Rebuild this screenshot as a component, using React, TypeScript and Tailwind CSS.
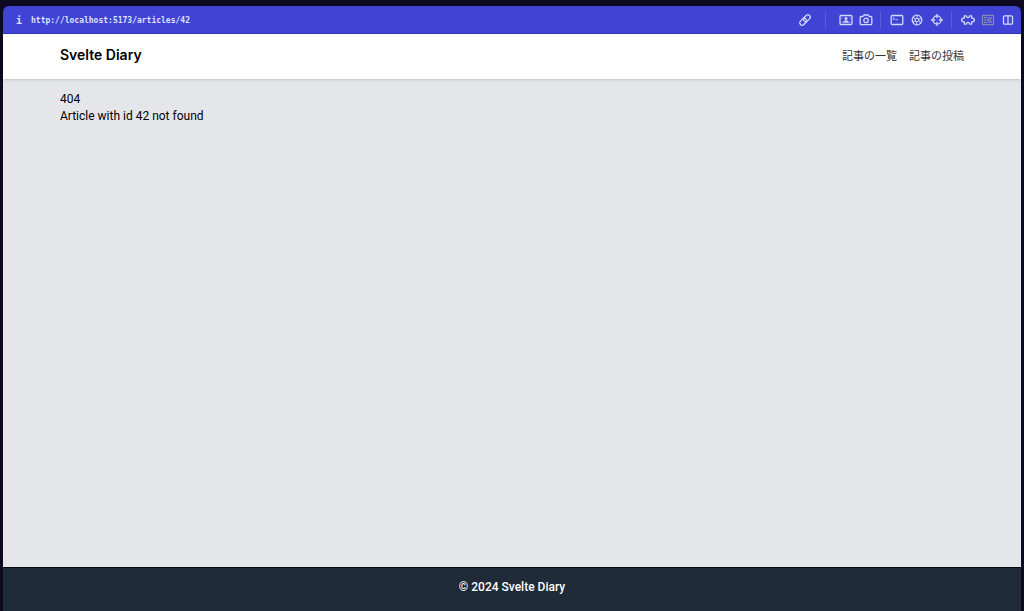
import type { ReactNode } from "react"

interface ToolButtonProps {
  label: string;
  dimmed?: boolean;
  children: ReactNode;
}

function ToolButton({ label, dimmed, children }: ToolButtonProps) {
  return (
    <button
      type="button"
      aria-label={label}
      className={dimmed ? "flex w-5 justify-center text-[#8585b8]" : "flex w-5 justify-center text-[#d3d7ff]"}
    >
      <svg
        viewBox="0 0 14 14"
        className="size-3.5"
        fill="none"
        stroke="currentColor"
        strokeWidth="1.3"
        strokeLinecap="round"
        strokeLinejoin="round"
        aria-hidden="true"
      >
        {children}
      </svg>
    </button>
  )
}

function Divider() {
  return <span className="h-4 w-px bg-[#5b5fdf]" />
}

function AddressBar() {
  return (
    <div className="flex h-7 items-center justify-between rounded-t-md border-b border-[#3338bd] bg-[#4044d4] pr-[3px] pl-3 text-[#dfe1ff]">
      <div className="flex items-center gap-2 pt-0.5 font-['DejaVu_Sans_Mono',monospace] font-bold">
        <span className="w-2 text-center text-[10px]">i</span>
        <a href="http://localhost:5173/articles/42" className="text-[8px]">
          http://localhost:5173/articles/42
        </a>
      </div>

      <div className="flex items-center">
        <ToolButton label="Copy link">
          <g transform="rotate(-45 7 7)">
            <rect x="0.6" y="4.6" width="7.6" height="4.8" rx="2.4" />
            <rect x="5.8" y="4.6" width="7.6" height="4.8" rx="2.4" />
          </g>
        </ToolButton>
        <div className="flex px-2.5"><Divider /></div>
        <div className="flex items-center pr-1">
          <ToolButton label="Profile">
            <rect x="1" y="2.5" width="12" height="9" rx="1" />
            <circle cx="7" cy="5.4" r="1.5" fill="currentColor" stroke="none" />
            <path d="M4 9.8c.2-1.8 1.3-2.6 3-2.6s2.8.8 3 2.6z" fill="currentColor" stroke="none" />
            <path d="M3 5v.2M11 5v.2M3 9v.2M11 9v.2" strokeWidth="0.8" />
          </ToolButton>
          <ToolButton label="Capture">
            <path d="M1.2 4.5q0-1 1-1h1.7l1-1.5h4.2l1 1.5h1.7q1 0 1 1v6.2q0 1-1 1H2.2q-1 0-1-1z" />
            <circle cx="7" cy="7.4" r="2.2" />
          </ToolButton>
        </div>
        <Divider />
        <div className="flex items-center pr-1 pl-1.5">
          <ToolButton label="Console">
            <rect x="1.2" y="2.5" width="11.6" height="9" rx="1" />
            <path d="M3.2 4.7l1.3 1-1.3 1M5.8 6.7h1.5" strokeWidth="0.9" />
          </ToolButton>
          <ToolButton label="Network">
            <circle cx="7" cy="7" r="4.8" />
            <circle cx="7" cy="7" r="1.7" strokeWidth="0.9" />
            <path d="M6 5.6l2-3.2M8.3 5.8l3.4 0M8.7 7.4l2 2.9M7.5 8.7l-1.8 3M5.6 8.2l-3.2.2M5.3 6.6L3.4 3.8" strokeWidth="0.9" />
          </ToolButton>
          <ToolButton label="Inspect">
            <circle cx="7" cy="7" r="4.1" />
            <path d="M7 1.5v3.2M7 9.3v3.2M1.5 7h3.2M9.3 7h3.2" />
          </ToolButton>
        </div>
        <Divider />
        <div className="flex items-center pl-1.5">
          <ToolButton label="Extensions">
            <path d="M3.3 2.9h2.2C5.5 4 6 4.6 7 4.6s1.5-.6 1.5-1.7h2.2v2.3c1.7-.1 2.7.7 2.7 1.8s-1 1.9-2.7 1.8v2.3H8.5C8.5 10 8 9.4 7 9.4s-1.5.6-1.5 1.7H3.3V8.8C1.6 8.9.6 8.1.6 7s1-1.9 2.7-1.8z" />
          </ToolButton>
          <ToolButton label="Developer mode" dimmed>
            <rect x="1.5" y="2.3" width="11" height="9.4" rx="0.5" />
            <path d="M3.5 4.5h2M3.5 7h1M3.5 9.5h2M8.5 4.5L6.5 7l2 2.5M10.5 4.5L9 7l1.5 2.5" />
          </ToolButton>
          <ToolButton label="Split view">
            <rect x="2.5" y="2.8" width="9" height="8.4" rx="1" />
            <path d="M7 2.8v8.4" />
          </ToolButton>
        </div>
      </div>
    </div>
  )
}

function Header() {
  return (
    <header className="z-10 bg-white px-[57px] shadow">
      <div className="flex h-[45px] items-center justify-between pb-[3px]">
        <a href="/" className="text-sm font-semibold text-black">Svelte Diary</a>
        <nav className="flex gap-3 font-['Noto_Sans_CJK_JP',sans-serif] text-[11px] text-[#333]">
          <a href="/articles">記事の一覧</a>
          <a href="/articles/new">記事の投稿</a>
        </nav>
      </div>
    </header>
  )
}

export default function App() {
  return (
    <div className="flex min-h-screen flex-col bg-[#0d0920] px-[3px] pt-1.5 font-[Inter,sans-serif]">
      <AddressBar />
      <Header />
      <main className="flex-1 bg-[#e5e6ea] px-[57px] pt-3 font-[Roboto,sans-serif] text-xs leading-[17px] text-black">
        <h1>404</h1>
        <p>Article with id 42 not found</p>
      </main>
      <footer className="flex h-11 items-center justify-center border-t border-[#05090f] bg-[#1f2b38] pb-1.5 font-[Roboto,sans-serif] text-xs font-medium text-white">
        © 2024 Svelte Diary
      </footer>
    </div>
  )
}
